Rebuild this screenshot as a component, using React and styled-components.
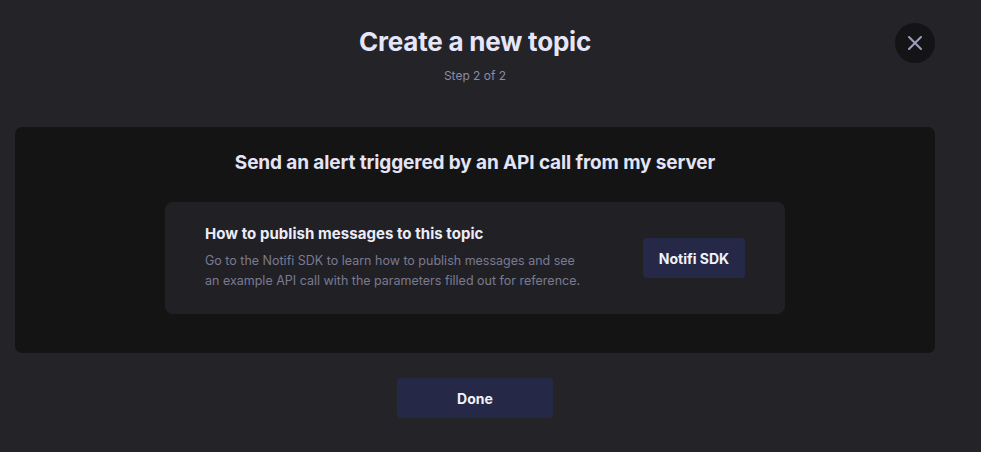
import React from "react";
import styled, { createGlobalStyle } from "styled-components";

const Global = createGlobalStyle`
  html, body { margin: 0; padding: 0; background: #232328; }
  body { font-family: "Inter", "Noto Sans", sans-serif; }
`;

const Page = styled.div`
  width: 950px;
  height: 452px;
  box-sizing: border-box;
  padding: 0 15px;
  display: flex;
  flex-direction: column;
  align-items: center;
`;

const Header = styled.header`
  position: relative;
  width: 100%;
  display: flex;
  flex-direction: column;
  align-items: center;
  padding-top: 25px;
  height: 127px;
  box-sizing: border-box;
`;

const Title = styled.h1`
  margin: 0;
  font-size: 26px;
  line-height: 34px;
  font-weight: 700;
  letter-spacing: -0.2px;
  color: #e6e6fa;
`;

const Step = styled.div`
  margin-top: 9px;
  font-size: 12px;
  line-height: 16px;
  color: #8b8ba6;
`;

const Close = styled.button`
  position: absolute;
  right: 0;
  top: 23px;
  width: 40px;
  height: 40px;
  border-radius: 50%;
  border: none;
  background: #141416;
  display: flex;
  align-items: center;
  justify-content: center;
  padding: 0;
  cursor: pointer;
`;

const Panel = styled.section`
  width: 100%;
  height: 226px;
  box-sizing: border-box;
  background: #141414;
  border-radius: 7px;
  display: flex;
  flex-direction: column;
  align-items: center;
  padding-top: 24px;
`;

const PanelTitle = styled.h2`
  margin: 0;
  font-size: 19px;
  line-height: 24px;
  font-weight: 700;
  letter-spacing: -0.12px;
  color: #e4e4f6;
`;

const Card = styled.div`
  margin-top: 27px;
  width: 620px;
  height: 112px;
  box-sizing: border-box;
  background: #212125;
  border-radius: 8px;
  display: flex;
  align-items: center;
  justify-content: space-between;
  padding: 0 40px;
`;

const CardText = styled.div`
  display: flex;
  flex-direction: column;
  padding-bottom: 2px;
`;

const CardTitle = styled.h3`
  margin: 0;
  font-size: 15px;
  line-height: 20px;
  font-weight: 700;
  letter-spacing: 0.05px;
  color: #ececf8;
`;

const CardDesc = styled.p`
  margin: 7px 0 0;
  font-size: 12.5px;
  line-height: 20px;
  color: #7a7a92;
  width: 380px;
`;

const Button = styled.button`
  border: none;
  border-radius: 4px;
  background: #262848;
  color: #f2f2f8;
  font-family: inherit;
  font-weight: 700;
  font-size: ${(p) => p.$size || 14}px;
  width: ${(p) => p.$w}px;
  height: 40px;
  cursor: pointer;
  padding: 0;
`;

const Footer = styled.div`
  margin-top: 25px;
  display: flex;
  justify-content: center;
`;

export default function App() {
  return (
    <>
      <Global />
      <Page>
        <Header>
          <Title>Create a new topic</Title>
          <Step>Step 2 of 2</Step>
          <Close aria-label="Close">
            <svg width="16" height="16" viewBox="0 0 16 16">
              <path d="M2 2 L14 14 M14 2 L2 14" stroke="#9d9dbd" strokeWidth="2" strokeLinecap="round" />
            </svg>
          </Close>
        </Header>
        <Panel>
          <PanelTitle>Send an alert triggered by an API call from my server</PanelTitle>
          <Card>
            <CardText>
              <CardTitle>How to publish messages to this topic</CardTitle>
              <CardDesc>
                Go to the Notifi SDK to learn how to publish messages and see an example API call with the parameters filled out for reference.
              </CardDesc>
            </CardText>
            <Button $w={102}>Notifi SDK</Button>
          </Card>
        </Panel>
        <Footer>
          <Button $w={156}>Done</Button>
        </Footer>
      </Page>
    </>
  );
}
